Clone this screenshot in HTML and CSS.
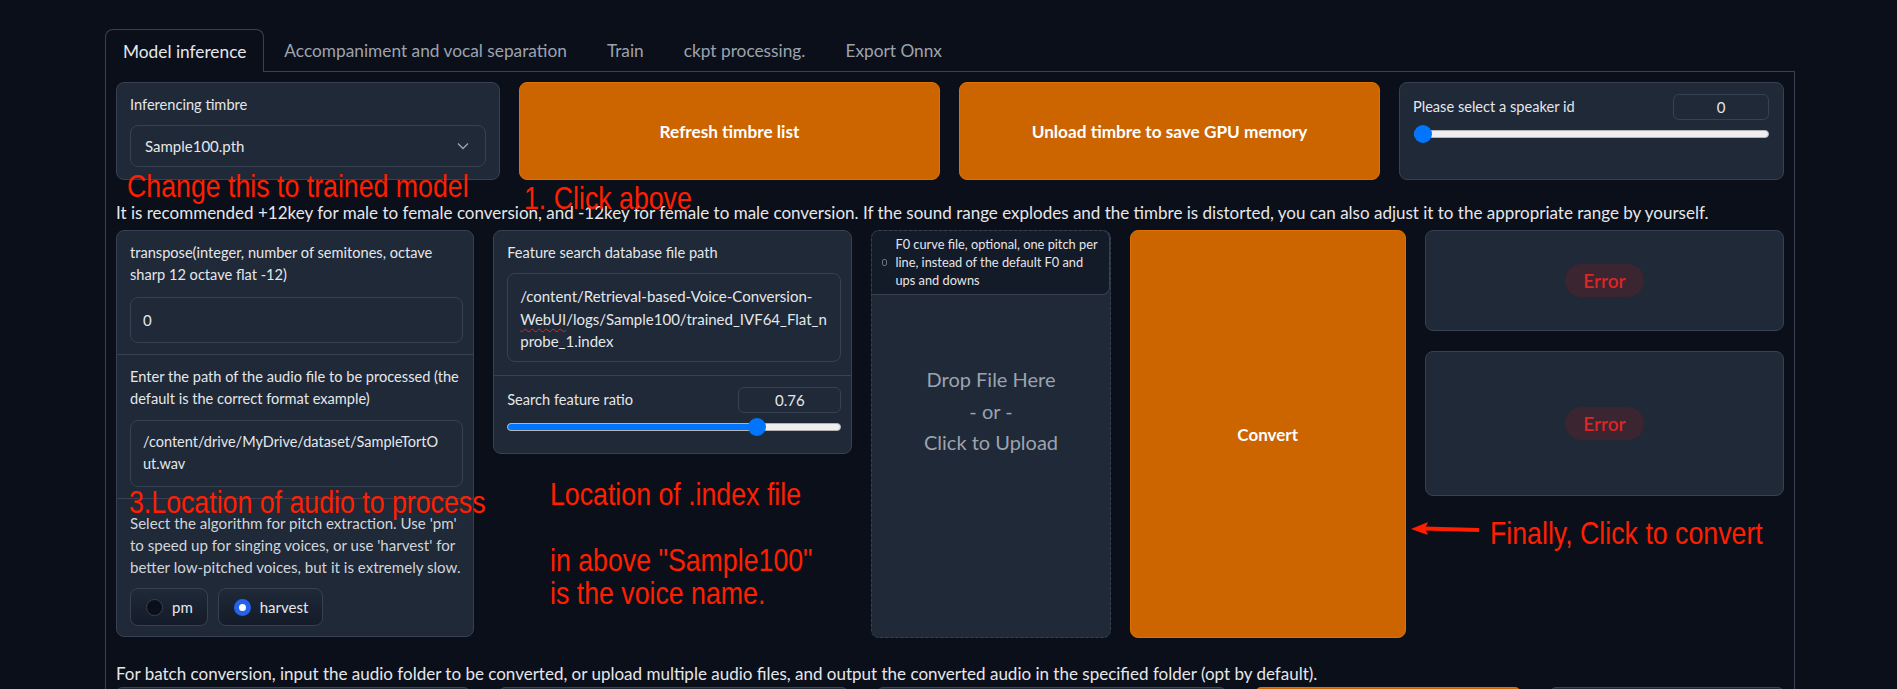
FILE: index.html
```html
<!DOCTYPE html>
<html lang="en">
<head>
<meta charset="utf-8">
<title>RVC WebUI - Model inference</title>
<link rel="stylesheet" href="styles.css">
</head>
<body>
<div class="page">
  <div class="container">
    <div class="tab-nav">
      <button class="tab selected">Model inference</button>
      <button class="tab">Accompaniment and vocal separation</button>
      <button class="tab">Train</button>
      <button class="tab">ckpt processing.</button>
      <button class="tab">Export Onnx</button>
    </div>
    <div class="tabitem">
      <div class="row row1">
        <div class="block pad-block">
          <span class="label">Inferencing timbre</span>
          <div class="select">
            <span>Sample100.pth</span>
            <svg class="chev" viewBox="0 0 12 8" width="12" height="8"><path d="M1 1.5 L6 6.5 L11 1.5" fill="none" stroke="#9ca3af" stroke-width="1.4"/></svg>
          </div>
        </div>
        <button class="btn-primary">Refresh timbre list</button>
        <button class="btn-primary">Unload timbre to save GPU memory</button>
        <div class="block pad-block slider-block">
          <div class="slider-head">
            <span class="label">Please select a speaker id</span>
            <div class="num num-speaker">0</div>
          </div>
          <div class="slider slider-speaker">
            <div class="track"><div class="fill" style="width: 9px"></div></div>
            <div class="thumb" style="left: 0px"></div>
          </div>
        </div>
      </div>

      <div class="desc desc1">It is recommended +12key for male to female conversion, and -12key for female to male conversion. If the sound range explodes and the timbre is distorted, you can also adjust it to the appropriate range by yourself.</div>

      <div class="row row2">
        <div class="block form col1">
          <div class="sect sect-a">
            <span class="label">transpose(integer, number of semitones, octave sharp 12 octave flat -12)</span>
            <div class="input input-one">0</div>
          </div>
          <div class="sect sect-b">
            <span class="label">Enter the path of the audio file to be processed (the default is the correct format example)</span>
            <div class="input input-two">/content/drive/MyDrive/dataset/SampleTortOut.wav</div>
          </div>
          <div class="sect sect-c">
            <span class="info">Select the algorithm for pitch extraction. Use 'pm' to speed up for singing voices, or use 'harvest' for better low-pitched voices, but it is extremely slow.</span>
            <div class="radios">
              <label class="radio"><span class="dot"></span>pm</label>
              <label class="radio"><span class="dot on"></span>harvest</label>
            </div>
          </div>
        </div>

        <div class="block form col2">
          <div class="sect sect-d">
            <span class="label">Feature search database file path</span>
            <div class="input input-three">/content/Retrieval-based-Voice-Conversion-<span class="squiggle">WebUI</span>/logs/Sample100/trained_IVF64_Flat_nprobe_1.index</div>
          </div>
          <div class="sect sect-e">
            <div class="slider-head">
              <span class="label">Search feature ratio</span>
              <div class="num num-ratio">0.76</div>
            </div>
            <div class="slider slider-ratio">
              <div class="track"><div class="fill" style="width: calc(76% - 4.7px)"></div></div>
              <div class="thumb" style="left: calc(76% - 13.7px)"></div>
            </div>
          </div>
        </div>

        <div class="upload">
          <div class="upload-head">
            <svg class="file-ico" viewBox="0 0 5 7" width="5" height="7"><rect x="0.5" y="0.5" width="4" height="6" rx="1.5" fill="none" stroke="#6b7280"/></svg>
            <span>F0 curve file, optional, one pitch per line, instead of the default F0 and ups and downs</span>
          </div>
          <div class="upload-body">
            <span>Drop File Here</span>
            <span>- or -</span>
            <span>Click to Upload</span>
          </div>
        </div>

        <button class="btn-primary btn-convert">Convert</button>

        <div class="col5">
          <div class="block err err1"><span class="badge">Error</span></div>
          <div class="block err err2"><span class="badge">Error</span></div>
        </div>
      </div>

      <div class="desc desc2">For batch conversion, input the audio folder to be converted, or upload multiple audio files, and output the converted audio in the specified folder (opt by default).</div>

      <div class="row row3">
        <div class="block stub"></div>
        <div class="block stub"></div>
        <div class="block stub"></div>
        <div class="btn-primary stub"></div>
        <div class="block stub"></div>
      </div>
    </div>
  </div>

  <div class="anno a-change">Change this to trained model</div>
  <div class="anno a-click">1. Click above</div>
  <div class="anno a-loc">3.Location of audio to process</div>
  <div class="anno a-index">Location of .index file</div>
  <div class="anno a-above">in above "Sample100"</div>
  <div class="anno a-voice">is the voice name.</div>
  <div class="anno a-final">Finally, Click to convert</div>
  <svg class="arrow" viewBox="0 0 70 20" width="70" height="20">
    <polygon points="0,10 17,3 14,9.5 17,16" fill="#ff1f00"/>
    <path d="M12 9.5 L68 11" stroke="#ff1f00" stroke-width="4"/>
  </svg>
</div>
</body>
</html>
```

FILE: styles.css
```css
* { box-sizing: border-box; }

body {
  margin: 0;
  background: #0b0f19;
  color: #e5e7eb;
  font-family: "Lato", "Noto Sans", "Liberation Sans", sans-serif;
}

.page {
  position: relative;
  width: 1897px;
  height: 689px;
  overflow: hidden;
}

.container {
  margin-left: 105px;
  width: 1690px;
  padding-top: 29px;
}

/* tabs */
.tab-nav {
  display: flex;
  height: 42px;
}

.tab {
  font-family: inherit;
  font-size: 17.3px;
  color: #9ca3af;
  background: transparent;
  border: 1px solid transparent;
  border-bottom: none;
  padding: 0 19px;
  height: 42px;
  cursor: pointer;
}

.tab.selected {
  position: relative;
  z-index: 1;
  height: 43px;
  margin-bottom: -1px;
  padding: 0 17px;
  color: #e5e7eb;
  background: #0b0f19;
  border-color: #374151;
  border-radius: 8px 8px 0 0;
}

.tabitem {
  border: 1px solid #374151;
  padding: 10px;
}

/* generic */
.row { display: grid; }

.row1 {
  grid-template-columns: minmax(0, 384fr) minmax(0, 421fr) minmax(0, 421fr) minmax(0, 385fr);
  gap: 19px;
  height: 98px;
}

.row2 {
  grid-template-columns: minmax(0, 358fr) minmax(0, 359fr) minmax(0, 239fr) minmax(0, 276fr) minmax(0, 359fr);
  gap: 19px;
  align-items: start;
}

.row3 {
  grid-template-columns: minmax(0, 354fr) minmax(0, 349fr) minmax(0, 349fr) minmax(0, 266fr) minmax(0, 234fr);
  gap: 29px;
}

.block {
  background: #1f2937;
  border: 1px solid #374151;
  border-radius: 8px;
}

.pad-block {
  padding: 11px 13px;
}

.label {
  display: block;
  font-size: 14.6px;
  line-height: 22px;
  color: #e5e7eb;
}

.btn-primary {
  font-family: inherit;
  font-weight: 700;
  font-size: 17.2px;
  color: #ffffff;
  background: #cc6400;
  border: 1px solid #de7200;
  border-radius: 8px;
  cursor: pointer;
}

/* select */
.select {
  margin-top: 9px;
  height: 42px;
  border: 1px solid #374151;
  border-radius: 8px;
  background: #1f2937;
  display: flex;
  align-items: center;
  justify-content: space-between;
  padding: 0 16px 0 14px;
  font-size: 15px;
}

/* slider */
.slider-head {
  display: flex;
  justify-content: space-between;
  align-items: center;
}

.num {
  flex: none;
  border: 1px solid #374151;
  border-radius: 6px;
  text-align: center;
  font-size: 15px;
}

.num-speaker {
  width: 96px;
  height: 26px;
  line-height: 24px;
  margin-right: 1px;
}

.slider {
  position: relative;
  height: 18px;
}

.track {
  position: absolute;
  left: 0;
  right: 0;
  top: 5px;
  height: 8px;
  border-radius: 4px;
  background: #efefef;
  border: 1px solid #b4b4b4;
  overflow: hidden;
}

.fill {
  height: 100%;
  background: #0075ff;
}

.thumb {
  position: absolute;
  top: 0;
  width: 18px;
  height: 18px;
  border-radius: 50%;
  background: #0075ff;
}

.slider-speaker {
  margin: 5px 1px 0;
}

/* description */
.desc {
  font-size: 17px;
  line-height: 26px;
  color: #e5e7eb;
  white-space: nowrap;
}

.desc1 {
  margin-top: 20px;
  margin-bottom: 4px;
}

.desc2 {
  margin-top: 23px;
}

/* forms */
.form {
  display: flex;
  flex-direction: column;
}

.sect {
  padding: 11px 10px 11px 13px;
}

.sect + .sect {
  border-top: 1px solid #374151;
}

.input {
  border: 1px solid #374151;
  border-radius: 8px;
  background: #1f2937;
  font-size: 15px;
  line-height: 22px;
  padding: 0 6px 0 12px;
  overflow-wrap: anywhere;
}

.input-one {
  margin-top: 11px;
  height: 46px;
  display: flex;
  align-items: center;
}

.input-two {
  margin-top: 10px;
  height: 67px;
  padding-top: 10px;
  padding-right: 22px;
  font-size: 14.5px;
  word-break: break-all;
}

.sect-c { padding-top: 13px; padding-bottom: 10px; }

.info {
  display: block;
  font-size: 15.1px;
  line-height: 22px;
  color: #d1d5db;
}

.radios {
  display: flex;
  gap: 10px;
  margin-top: 10px;
}

.radio {
  display: flex;
  align-items: center;
  gap: 9px;
  height: 38px;
  padding: 0 14px 0 15px;
  border: 1px solid #374151;
  border-radius: 8px;
  background: linear-gradient(#1f2937, #141b29);
  font-size: 15px;
}

.dot {
  width: 17px;
  height: 17px;
  border-radius: 50%;
  border: 1px solid #374151;
  background: #0b0f19;
}

.dot.on {
  background: #ffffff;
  border: 5px solid #2563eb;
}

.sect-d { padding-bottom: 13px; }

.input-three {
  margin-top: 9px;
  height: 89px;
  padding-top: 11px;
  line-height: 22.5px;
}

.squiggle {
  text-decoration: underline wavy #dc2626 1px;
  text-underline-offset: 3px;
}

.sect-e { padding-bottom: 17px; }

.num-ratio {
  width: 103px;
  height: 26px;
  line-height: 24px;
}

.slider-ratio { margin-top: 5px; }

/* upload */
.upload {
  height: 408px;
  background: #1f2937;
  border: 1px dashed #374151;
  border-radius: 8px;
  display: flex;
  flex-direction: column;
}

.upload-head {
  display: flex;
  align-items: center;
  gap: 8px;
  background: #131a28;
  border-bottom: 1px solid #374151;
  border-right: 1px solid #374151;
  border-radius: 8px 8px 8px 0;
  padding: 4px 6px 5px 10px;
  font-size: 12.8px;
  line-height: 18px;
  color: #e5e7eb;
  height: 64px;
}

.file-ico { flex: none; }

.upload-body {
  display: flex;
  flex-direction: column;
  align-items: center;
  padding-top: 69px;
  font-size: 20px;
  line-height: 31.5px;
  color: #9ca3af;
}

.btn-convert {
  height: 408px;
  font-size: 17px;
}

/* errors */
.col5 {
  display: flex;
  flex-direction: column;
  gap: 20px;
}

.err {
  display: flex;
  align-items: center;
  justify-content: center;
}

.err1 { height: 101px; }
.err2 { height: 145px; }

.badge {
  display: inline-block;
  padding: 0 18px;
  height: 33px;
  line-height: 33px;
  border-radius: 17px;
  background: #3a2531;
  color: #dc2626;
  font-size: 19px;
  font-weight: 600;
}

.stub {
  height: 12px;
}

/* annotations */
.anno {
  position: absolute;
  font-family: "Liberation Sans", Arial, sans-serif;
  color: #ff1f00;
  font-size: 32px;
  line-height: 1;
  white-space: nowrap;
  transform: scaleX(0.835);
  transform-origin: left top;
}

.a-change { left: 127px; top: 170px; }
.a-click { left: 524px; top: 182px; }
.a-loc { left: 129px; top: 486px; }
.a-index { left: 550px; top: 478px; }
.a-above { left: 550px; top: 544px; }
.a-voice { left: 550px; top: 577px; }
.a-final { left: 1490px; top: 517px; }

.arrow {
  position: absolute;
  left: 1411px;
  top: 519px;
}
```
